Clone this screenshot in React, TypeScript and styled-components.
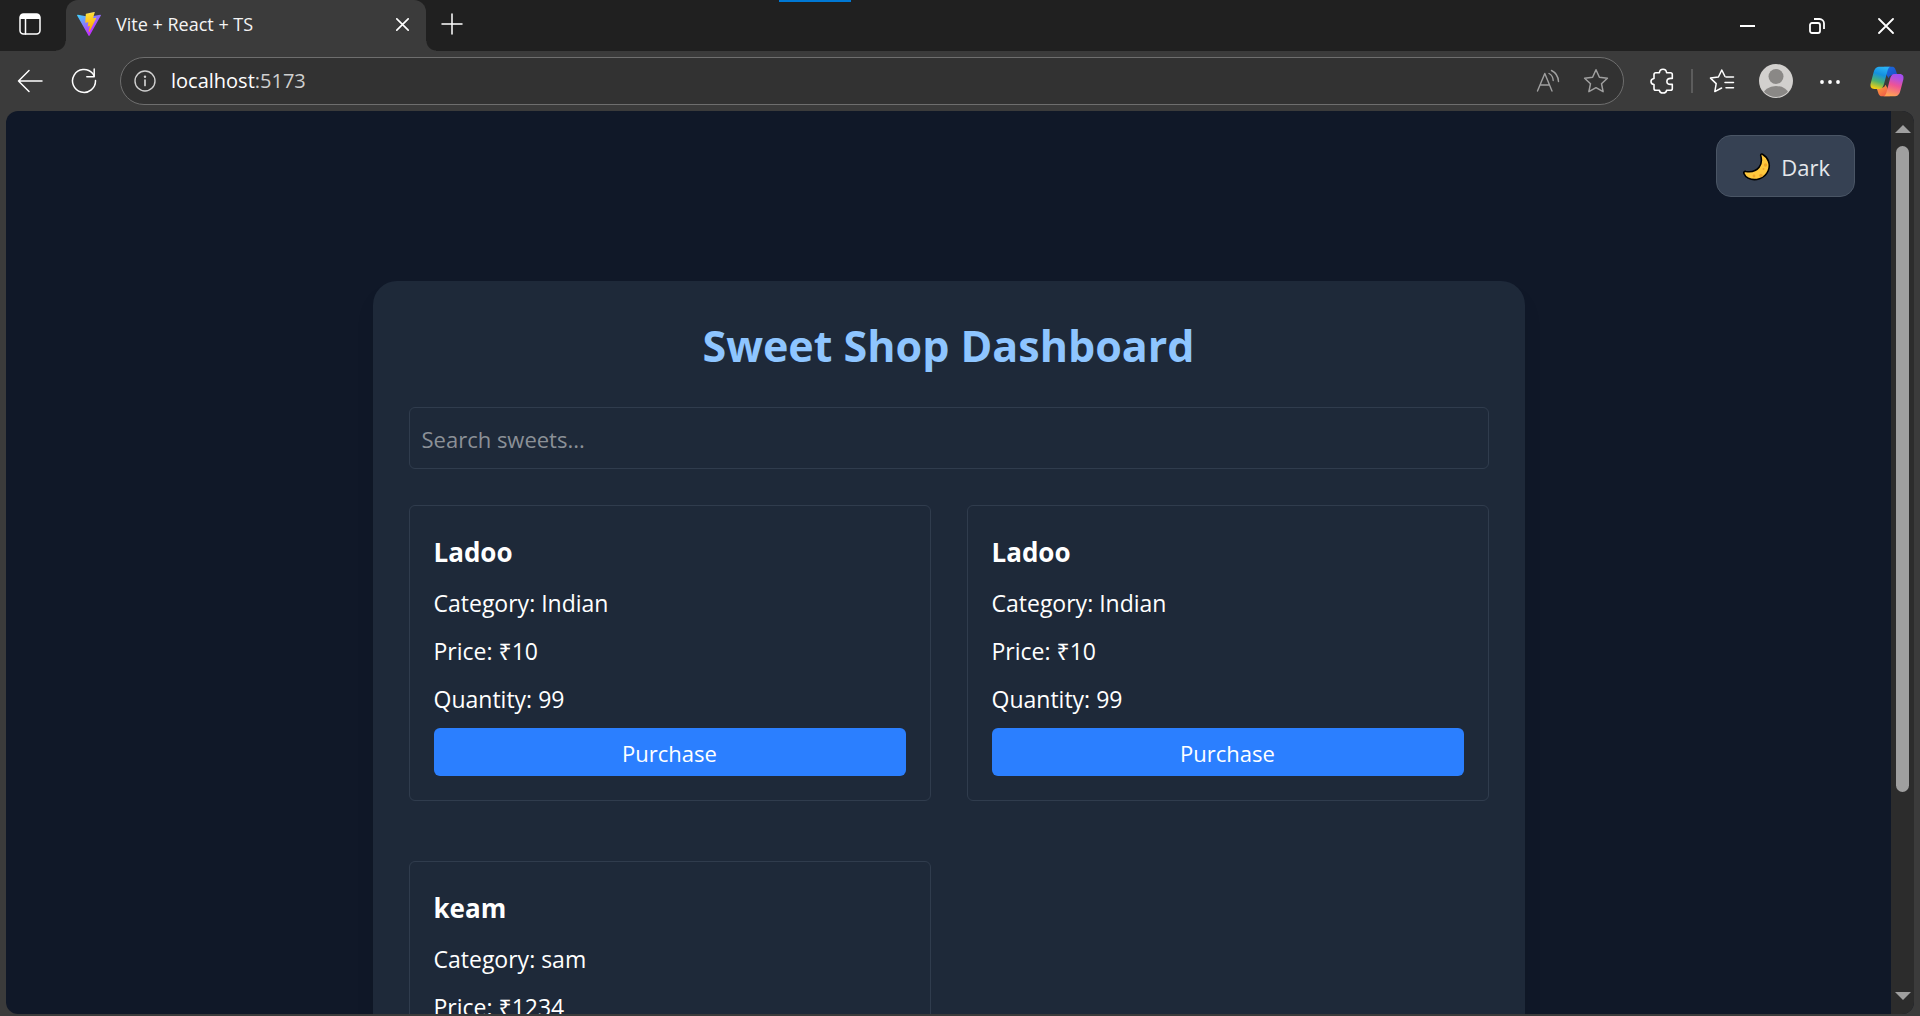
import React, { useState } from "react";
import styled, { createGlobalStyle } from "styled-components";

const GlobalStyle = createGlobalStyle`
  *, *::before, *::after { box-sizing: border-box; }
  body { margin: 0; background: #3b3b3b; }
  body, button, input { font-family: "Open Sans", "Noto Sans", sans-serif; }
  h1, h2, p { margin: 0; }
`;

const Browser = styled.div`
  display: flex;
  flex-direction: column;
  height: 100vh;
  overflow: hidden;
  background: #3b3b3b;
`;

const TitleBar = styled.header`
  position: relative;
  display: flex;
  align-items: stretch;
  height: 51px;
  padding-left: 6px;
  background: #202020;
`;

const LoadMarker = styled.span`
  position: absolute;
  top: 0;
  left: 779px;
  width: 72px;
  height: 2px;
  background: #0078d4;
`;

const IconButton = styled.button<{ $width?: number; $color?: string }>`
  display: flex;
  flex: none;
  align-items: center;
  justify-content: center;
  width: ${(p) => p.$width ?? 48}px;
  padding: 0;
  border: 0;
  background: transparent;
  color: ${(p) => p.$color ?? "#ffffff"};
  cursor: pointer;
`;

const StripButton = styled(IconButton)`
  padding-bottom: 4px;
`;

const Tab = styled.div`
  position: relative;
  display: flex;
  align-items: center;
  gap: 15px;
  width: 360px;
  margin: 0 2px 0 12px;
  padding: 0 12px 3px 11px;
  border-radius: 12px 12px 0 0;
  background: #3b3b3b;

  &::before,
  &::after {
    content: "";
    position: absolute;
    bottom: 0;
    width: 10px;
    height: 10px;
  }
  &::before {
    left: -10px;
    background: radial-gradient(circle at 0 0, transparent 9px, #3b3b3b 10px);
  }
  &::after {
    right: -10px;
    background: radial-gradient(circle at 100% 0, transparent 9px, #3b3b3b 10px);
  }
`;

const TabTitle = styled.span`
  flex: 1;
  color: #f4f4f4;
  font-size: 18px;
  line-height: 24px;
  white-space: nowrap;
`;

const WindowControls = styled.div`
  display: flex;
  margin-left: auto;
`;

const Toolbar = styled.nav`
  display: flex;
  align-items: stretch;
  gap: 6px;
  height: 60px;
  padding: 6px;
`;

const AddressBar = styled.div`
  display: flex;
  flex: 1;
  align-items: center;
  margin: 0 8px 0 6px;
  padding: 0 3px 0 0;
  border: 1px solid #6e6e6e;
  border-radius: 24px;
  background: #323232;
`;

const Address = styled.a`
  flex: 1;
  margin-left: 2px;
  color: #ffffff;
  font-size: 20px;
  line-height: 28px;
  text-decoration: none;
`;

const Port = styled.span`
  color: #cfcfcf;
`;

const Divider = styled.span`
  align-self: center;
  width: 2px;
  height: 24px;
  margin: 0 -1px;
  background: #5c5c5c;
`;

const Viewport = styled.div`
  display: flex;
  flex: 1;
  min-height: 0;
  margin: 0 6px 2px;
  border-radius: 12px;
  overflow: hidden;
  background: #101828;
`;

const Page = styled.main`
  flex: 1;
  min-width: 0;
  padding: 24px 36px;
  overflow: hidden;
`;

const PageHeader = styled.div`
  display: flex;
  justify-content: flex-end;
  margin-bottom: 84px;
`;

const ThemeButton = styled.button`
  display: flex;
  align-items: center;
  gap: 10px;
  height: 62px;
  padding: 2px 24px 0 26px;
  border: 1px solid #4a5565;
  border-radius: 15px;
  background: #364153;
  color: #e5e7eb;
  font-size: 22px;
  line-height: 36px;
  cursor: pointer;
`;

const Panel = styled.section`
  max-width: 1152px;
  margin: 0 auto;
  padding: 36px;
  border-radius: 24px;
  background: #1e2939;
  box-shadow: 0 15px 22px -4px rgba(0, 0, 0, 0.1);
`;

const Heading = styled.h1`
  margin-bottom: 32px;
  color: #8ec5ff;
  font-size: 43px;
  font-weight: 700;
  line-height: 58px;
  text-align: center;
`;

const SearchInput = styled.input`
  display: block;
  width: 100%;
  height: 62px;
  margin-bottom: 36px;
  padding: 2px 12px 0;
  border: 1px solid #303c4d;
  border-radius: 6px;
  outline: 0;
  background: transparent;
  color: #ffffff;
  font-size: 22px;

  &::placeholder {
    color: #8b9097;
    opacity: 1;
  }
`;

const SweetGrid = styled.div`
  display: grid;
  grid-template-columns: 1fr 1fr;
  gap: 60px 36px;
`;

const SweetCard = styled.article`
  display: flex;
  flex-direction: column;
  gap: 10px;
  padding: 24px;
  border: 1px solid #303c4d;
  border-radius: 6px;
  color: #ffffff;
`;

const SweetName = styled.h2`
  font-size: 26px;
  font-weight: 700;
  line-height: 44px;
`;

const SweetDetail = styled.p`
  font-size: 23px;
  line-height: 38px;
`;

const PurchaseButton = styled.button`
  height: 48px;
  padding: 2px 0 0;
  border: 0;
  border-radius: 6px;
  background: #2b7fff;
  color: #ffffff;
  font-size: 22px;
  line-height: 36px;
  cursor: pointer;
`;

const ScrollTrack = styled.div`
  display: flex;
  flex: none;
  flex-direction: column;
  align-items: center;
  width: 23px;
  padding: 14px 0;
  background: #2c2c2c;
`;

const ScrollArrow = styled.span<{ $down?: boolean }>`
  border: 8px solid transparent;
  border-top: ${(p) => (p.$down ? "8px solid #9f9f9f" : "0")};
  border-bottom: ${(p) => (p.$down ? "0" : "8px solid #9f9f9f")};
`;

const ScrollLane = styled.div`
  flex: 1;
  width: 13px;
  margin: 13px 0;
`;

const ScrollThumb = styled.div`
  height: calc(100% * 31 / 40);
  border-radius: 7px;
  background: #9f9f9f;
`;

const stroke = {
  fill: "none",
  stroke: "currentColor",
  strokeLinecap: "round" as const,
  strokeLinejoin: "round" as const,
};

const TabActionsIcon = () => (
  <svg width="22" height="22" viewBox="0 0 22 22" aria-hidden="true">
    <rect x="1" y="1" width="20" height="20" rx="3.5" {...stroke} strokeWidth="1.5" />
    <path d="M1 6V4a3 3 0 0 1 3-3h14a3 3 0 0 1 3 3v2z" fill="currentColor" />
    <path d="M6.5 6v15" {...stroke} strokeWidth="1.5" />
  </svg>
);

const ViteLogo = () => (
  <svg width="24" height="24" viewBox="0 0 256 257" aria-hidden="true">
    <defs>
      <linearGradient id="viteShield" x1="-.828%" x2="57.636%" y1="7.652%" y2="78.411%">
        <stop offset="0%" stopColor="#41D1FF" />
        <stop offset="100%" stopColor="#BD34FE" />
      </linearGradient>
      <linearGradient id="viteBolt" x1="43.376%" x2="50.316%" y1="2.242%" y2="89.03%">
        <stop offset="0%" stopColor="#FFEA83" />
        <stop offset="8.333%" stopColor="#FFDD35" />
        <stop offset="100%" stopColor="#FFA800" />
      </linearGradient>
    </defs>
    <path fill="url(#viteShield)" d="M255.153 37.938L134.897 252.976c-2.483 4.440-8.862 4.466-11.382.048L.875 37.958c-2.746-4.814 1.371-10.646 6.827-9.670l120.385 21.517a6.537 6.537 0 0 0 2.322-.004l117.867-21.483c5.438-.991 9.574 4.796 6.877 9.620Z" />
    <path fill="url(#viteBolt)" d="M185.432.063L96.440 17.501a3.268 3.268 0 0 0-2.634 3.014l-5.474 92.456a3.268 3.268 0 0 0 3.997 3.378l24.777-5.718c2.318-.535 4.413 1.507 3.936 3.838l-7.361 36.047c-.495 2.426 1.782 4.500 4.151 3.780l15.304-4.649c2.372-.720 4.652 1.360 4.150 3.788l-11.698 56.621c-.732 3.542 3.979 5.473 5.943 2.437l1.313-2.028l72.516-144.720c1.215-2.423-.880-5.186-3.540-4.672l-25.505 4.922c-2.396.462-4.435-1.770-3.759-4.114l16.646-57.705c.677-2.350-1.370-4.583-3.769-4.113Z" />
  </svg>
);

const CrossIcon = ({ size, weight }: { size: number; weight: number }) => (
  <svg width={size} height={size} viewBox="0 0 16 16" aria-hidden="true">
    <path d="M1 1l14 14M15 1L1 15" {...stroke} strokeWidth={weight} />
  </svg>
);

const PlusIcon = () => (
  <svg width="22" height="22" viewBox="0 0 22 22" aria-hidden="true">
    <path d="M11 1v20M1 11h20" {...stroke} strokeWidth="1.5" />
  </svg>
);

const MinimizeIcon = () => (
  <svg width="16" height="16" viewBox="0 0 16 16" aria-hidden="true">
    <path d="M0 8h15" {...stroke} strokeLinecap="butt" strokeWidth="2" />
  </svg>
);

const RestoreIcon = () => (
  <svg width="16" height="16" viewBox="0 0 16 16" aria-hidden="true">
    <rect x="1" y="5" width="10" height="10" rx="2" {...stroke} strokeWidth="1.8" />
    <path d="M5 1h5.5A4.500 4.500 0 0 1 15 5.500V11" {...stroke} strokeLinecap="butt" strokeWidth="1.8" />
  </svg>
);

const BackIcon = () => (
  <svg width="26" height="24" viewBox="0 0 26 24" aria-hidden="true">
    <path d="M25 12H1.500M12 1.500L1.500 12 12 22.500" {...stroke} strokeWidth="1.5" />
  </svg>
);

const RefreshIcon = () => (
  <svg width="26" height="26" viewBox="0 0 26 26" aria-hidden="true">
    <path d="M24.500 12.500A11.500 11.500 0 1 1 21.500 5.200L23 7.500" {...stroke} strokeWidth="1.5" />
    <path d="M23.200 1v7.800h-7.400" {...stroke} strokeWidth="1.5" />
  </svg>
);

const InfoIcon = () => (
  <svg width="22" height="22" viewBox="0 0 22 22" aria-hidden="true">
    <circle cx="11" cy="11" r="10" {...stroke} strokeWidth="1.4" />
    <path d="M11 10v5.500" {...stroke} strokeWidth="1.7" />
    <circle cx="11" cy="6.800" r="1.200" fill="currentColor" />
  </svg>
);

const ReadAloudIcon = () => (
  <svg width="24" height="24" viewBox="0 0 24 24" aria-hidden="true">
    <g {...stroke} strokeWidth="1.4">
      <path d="M1.500 22L8.800 4.500 16 22M4 16h9.500" />
      <path d="M13 4.500c2.500 1.300 4 3.800 4.200 7M15.500 1.500c4 2 6.700 6 7 11" />
    </g>
  </svg>
);

const StarIcon = () => (
  <svg width="26" height="26" viewBox="0 0 26 26" aria-hidden="true">
    <path
      d="M13 1.800l3.400 7.400 8 1-5.900 5.500 1.600 8-7.100-4-7.100 4 1.600-8L1.600 10.200l8-1z"
      {...stroke}
      strokeWidth="1.5"
    />
  </svg>
);

const PuzzleIcon = () => (
  <svg width="24" height="27" viewBox="0 0 24 27" aria-hidden="true">
    <path
      d="M5.800 4.700h3.600C9.600 2.400 11 1.200 13 1.200s3.400 1.200 3.600 3.500h3.900a1.800 1.800 0 0 1 1.800 1.800v3.900h-1.600c-2.600 0-3.800 1.400-3.800 3s1.200 3 3.800 3h1.600v4.100a1.800 1.800 0 0 1-1.800 1.800h-3.900c-.2 1.800-1.600 2.700-3.600 2.700s-3.400-.9-3.600-2.700H5.800a1.800 1.800 0 0 1-1.800-1.800v-4C2 16.300 1 15.100 1 13.500s1-2.800 3-3V6.500a1.800 1.800 0 0 1 1.800-1.800z"
      {...stroke}
      strokeWidth="1.6"
    />
  </svg>
);

const FavoritesIcon = () => (
  <svg width="26" height="26" viewBox="0 0 26 26" aria-hidden="true">
    <g {...stroke} strokeWidth="1.5">
      <path d="M16 8.500L12.800 2 9.400 9l-7.900 1.100 5.700 5.500-1.400 8L12.600 20" />
      <path d="M17 9h7.500M16 14.500h8.500M17 19.800h7.500" />
    </g>
  </svg>
);

const Avatar = () => (
  <svg width="34" height="34" viewBox="0 0 34 34" aria-hidden="true">
    <clipPath id="avatarClip">
      <circle cx="17" cy="17" r="16" />
    </clipPath>
    <circle cx="17" cy="17" r="17" fill="#d2d0ce" />
    <g clipPath="url(#avatarClip)" fill="#8a8886">
      <circle cx="17" cy="12.500" r="7.500" />
      <ellipse cx="17" cy="31" rx="13" ry="9" />
    </g>
  </svg>
);

const MoreIcon = () => (
  <svg width="20" height="6" viewBox="0 0 20 6" fill="currentColor" aria-hidden="true">
    <circle cx="2" cy="4" r="1.900" />
    <circle cx="10" cy="4" r="1.900" />
    <circle cx="18" cy="4" r="1.900" />
  </svg>
);

const CopilotLogo = () => (
  <svg width="34" height="31" viewBox="0 0 101 92" aria-hidden="true">
    <defs>
      <linearGradient id="copilotLeft" x1="0.600" y1="0" x2="0.300" y2="1">
        <stop offset="0" stopColor="#2bb3f5" />
        <stop offset="0.350" stopColor="#1490df" />
        <stop offset="0.680" stopColor="#4fb26d" />
        <stop offset="1" stopColor="#f5cf12" />
      </linearGradient>
      <linearGradient id="copilotRight" x1="0.700" y1="0" x2="0.400" y2="1">
        <stop offset="0" stopColor="#a24df0" />
        <stop offset="0.200" stopColor="#b551dc" />
        <stop offset="0.500" stopColor="#ee5396" />
        <stop offset="1" stopColor="#ffa552" />
      </linearGradient>
      <linearGradient id="copilotTop" x1="0" y1="0" x2="1" y2="1">
        <stop offset="0" stopColor="#1b6fe0" />
        <stop offset="1" stopColor="#1c48c4" />
      </linearGradient>
      <linearGradient id="copilotBottom" x1="0" y1="0" x2="1" y2="1">
        <stop offset="0" stopColor="#ffb03a" />
        <stop offset="1" stopColor="#ee4c4a" />
      </linearGradient>
    </defs>
    <path fill="url(#copilotTop)" d="M42 2h24c8 0 10 8 13 18 1 5 5 7 9 7H68c-8 0-11 4-13 9l-6-10z" />
    <path fill="url(#copilotBottom)" d="M59 90H35c-8 0-10-8-13-18-1-5-5-7-9-7h20c8 0 11-4 13-9l6 10z" />
    <path fill="url(#copilotLeft)" d="M30 2h32c-6 0-8 6-10 12L42 52c-3 10-6 16-14 16H13C3 68 0 61 2 52l9-34C14 7 19 2 30 2z" />
    <path fill="url(#copilotRight)" d="M71 90H39c6 0 8-6 10-12l10-38c3-10 6-16 14-16h15c10 0 13 7 11 16l-9 34C87 85 82 90 71 90z" />
  </svg>
);

const MoonIcon = () => (
  <svg width="28" height="28" viewBox="0 0 28 28" aria-hidden="true">
    <path
      d="M19.500 1.200c5.400 3 8.500 10.200 5.700 16.500-3.500 8-13 11-20 7.400-2-1-3.600-2.700-4.300-4.600-.5-1.400.5-2.400 2-2 5.400.8 10.300-.4 13.200-4.200 2.500-3.300 2.800-7.300 1.700-11.400-.4-1.400.5-2.300 1.700-1.700z"
      fill="#ffc83d"
      stroke="#000"
      strokeWidth="1.6"
    />
    <circle cx="22.500" cy="12" r="1.700" fill="#f0a72c" />
    <circle cx="11" cy="23" r="1.400" fill="#f0a72c" />
    <circle cx="18" cy="22.500" r="1.800" fill="#f0a72c" />
    <circle cx="20.500" cy="16" r="1" fill="#f0a72c" />
  </svg>
);

type Sweet = {
  id: number;
  name: string;
  category: string;
  price: number;
  quantity?: number;
};

const sweets: Sweet[] = [
  { id: 1, name: "Ladoo", category: "Indian", price: 10, quantity: 99 },
  { id: 2, name: "Ladoo", category: "Indian", price: 10, quantity: 99 },
  { id: 3, name: "keam", category: "sam", price: 1234 },
];

export default function App() {
  const [query, setQuery] = useState("");
  const visible = sweets.filter((s) => s.name.toLowerCase().includes(query.toLowerCase()));

  return (
    <>
      <GlobalStyle />
      <Browser>
        <TitleBar>
          <LoadMarker />
          <StripButton aria-label="Tab actions">
            <TabActionsIcon />
          </StripButton>
          <Tab>
            <ViteLogo />
            <TabTitle>Vite + React + TS</TabTitle>
            <IconButton $width={24} aria-label="Close tab">
              <CrossIcon size={13} weight={2} />
            </IconButton>
          </Tab>
          <StripButton aria-label="New tab">
            <PlusIcon />
          </StripButton>
          <WindowControls>
            <IconButton $width={69} aria-label="Minimize">
              <MinimizeIcon />
            </IconButton>
            <IconButton $width={69} aria-label="Restore">
              <RestoreIcon />
            </IconButton>
            <IconButton $width={69} aria-label="Close">
              <CrossIcon size={16} weight={1.8} />
            </IconButton>
          </WindowControls>
        </TitleBar>

        <Toolbar>
          <IconButton aria-label="Back">
            <BackIcon />
          </IconButton>
          <IconButton aria-label="Refresh">
            <RefreshIcon />
          </IconButton>
          <AddressBar>
            <IconButton aria-label="Site information" $color="#d0d0d0">
              <InfoIcon />
            </IconButton>
            <Address href="#">
              localhost<Port>:5173</Port>
            </Address>
            <IconButton aria-label="Read aloud" $color="#a0a0a0">
              <ReadAloudIcon />
            </IconButton>
            <IconButton aria-label="Add to favorites" $color="#a0a0a0">
              <StarIcon />
            </IconButton>
          </AddressBar>
          <IconButton aria-label="Extensions">
            <PuzzleIcon />
          </IconButton>
          <Divider />
          <IconButton aria-label="Favorites">
            <FavoritesIcon />
          </IconButton>
          <IconButton aria-label="Profile">
            <Avatar />
          </IconButton>
          <IconButton aria-label="Settings and more">
            <MoreIcon />
          </IconButton>
          <IconButton $width={54} aria-label="Copilot">
            <CopilotLogo />
          </IconButton>
        </Toolbar>

        <Viewport>
          <Page>
            <PageHeader>
              <ThemeButton>
                <MoonIcon />
                Dark
              </ThemeButton>
            </PageHeader>
            <Panel>
              <Heading>Sweet Shop Dashboard</Heading>
              <SearchInput
                aria-label="Search sweets"
                placeholder="Search sweets..."
                value={query}
                onChange={(e) => setQuery(e.target.value)}
              />
              <SweetGrid>
                {visible.map((sweet) => (
                  <SweetCard key={sweet.id}>
                    <SweetName>{sweet.name}</SweetName>
                    <SweetDetail>Category: {sweet.category}</SweetDetail>
                    <SweetDetail>Price: ₹{sweet.price}</SweetDetail>
                    {sweet.quantity !== undefined && (
                      <>
                        <SweetDetail>Quantity: {sweet.quantity}</SweetDetail>
                        <PurchaseButton>Purchase</PurchaseButton>
                      </>
                    )}
                  </SweetCard>
                ))}
              </SweetGrid>
            </Panel>
          </Page>
          <ScrollTrack>
            <ScrollArrow />
            <ScrollLane>
              <ScrollThumb />
            </ScrollLane>
            <ScrollArrow $down />
          </ScrollTrack>
        </Viewport>
      </Browser>
    </>
  );
}
